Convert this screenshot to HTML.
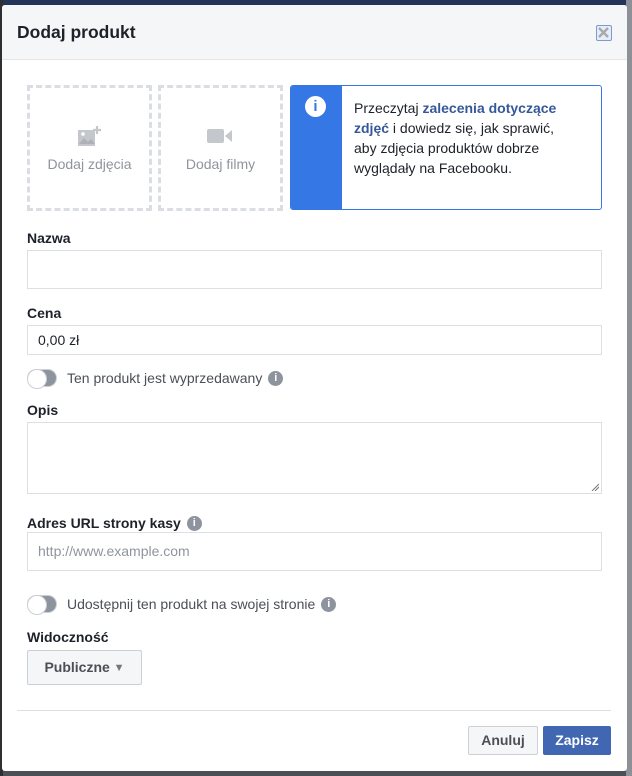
<!DOCTYPE html>
<html><head><meta charset="utf-8"><style>
*{box-sizing:border-box;margin:0;padding:0}
body{width:632px;height:776px;overflow:hidden;background:#4b4f56;font-family:"Liberation Sans",Arial,sans-serif;position:relative}
.topbar{position:absolute;left:0;top:0;width:632px;height:6px;background:#23335a}
.leftbar{position:absolute;left:0;top:0;width:3px;height:776px;background:#2d2f33}
.rightbar{position:absolute;right:0;top:0;width:6px;height:776px;background:#8d9096}
.modal{position:absolute;left:2px;top:5px;width:625px;height:766px;background:#fff;border-radius:3px;overflow:hidden}
.hdr{height:55px;background:#f5f6f7;border-bottom:1px solid #e5e5e5;position:relative}
.hdr h1{position:absolute;left:15px;top:17px;font-size:17.5px;font-weight:bold;color:#1d2129}
.close{position:absolute;left:594px;top:20px;width:16px;height:16px;border:1.5px solid #7b9ad8;border-radius:2px;background:#e8ecf3}
.abs{position:absolute}
.dash{border:3px dashed #dadde1;width:125px;height:126px;top:80px}
.dash span{position:absolute;left:0;right:0;top:68px;text-align:center;font-size:14px;color:#90949c}
.info{left:288px;top:80px;width:312px;height:125px;border:1px solid #3578e5;border-radius:3px;overflow:hidden}
.info .bl{position:absolute;left:0;top:0;width:51px;height:125px;background:#3578e5}
.info .ic{position:absolute;left:14px;top:10px;width:21px;height:21px;border-radius:50%;background:#fff;color:#3578e5;font-weight:bold;font-size:15px;text-align:center;line-height:21px}
.info p{position:absolute;left:63px;top:12px;width:222px;font-size:14px;line-height:20px;color:#1d2129}
.info b{color:#365899}
.lbl{font-size:14px;font-weight:bold;color:#1d2129;left:25px}
.inp{left:25px;width:575px;border:1px solid #dddfe2;background:#fff;font-size:14px;color:#1d2129;padding-left:10px}
.tog{left:25px;width:30px;height:18px;border-radius:9px;background:#8d949e;border:1px solid #ccd0d5}
.tog::after{content:"";position:absolute;left:-1px;top:-1px;width:18px;height:18px;border-radius:50%;background:#fff;border:1px solid #ccd0d5}
.tt{font-size:14px;color:#4b4f56;left:65px;line-height:16px}
.lbl{line-height:16px}
.ii{display:inline-block;width:15px;height:15px;border-radius:50%;background:#8d949e;color:#fff;font-size:11px;font-weight:bold;text-align:center;line-height:15px;vertical-align:top;margin-left:6px;position:relative;top:1px}
.btn{height:29px;border-radius:2px;font-size:14px;font-weight:bold;line-height:27px;text-align:center}
</style></head><body>
<div class="topbar"></div><div class="leftbar"></div><div class="rightbar"></div>
<div class="modal">
<div class="hdr"><h1>Dodaj produkt</h1><div class="close"><svg width="13" height="13" viewBox="0 0 13 13"><path d="M2 2L11 11M11 2L2 11" stroke="#a6a9ae" stroke-width="2.4"/></svg></div></div>
<div class="abs dash" style="left:25px"><svg class="abs" style="left:48px;top:38px" width="24" height="22" viewBox="0 0 24 22"><rect x="0" y="4" width="17" height="16" fill="#c4c7cc"/><path d="M1 18l5-6 4 4 3-3 4 5z" fill="#aeb1b6"/><circle cx="5" cy="8" r="1.8" fill="#fff"/><path d="M19 0v8M15 4h8" stroke="#c4c7cc" stroke-width="2.2"/></svg><span>Dodaj zdjęcia</span></div>
<div class="abs dash" style="left:156px"><svg class="abs" style="left:46px;top:40px" width="26" height="16" viewBox="0 0 26 16"><rect x="0" y="1" width="17" height="14" rx="2" fill="#c4c7cc"/><path d="M18 8l7-6v12z" fill="#c4c7cc"/></svg><span>Dodaj filmy</span></div>
<div class="abs info"><div class="bl"><div class="ic">i</div></div><p>Przeczytaj <b>zalecenia dotyczące zdjęć</b> i dowiedz się, jak sprawić, aby zdjęcia produktów dobrze wyglądały na Facebooku.</p></div>
<div class="abs lbl" style="top:225px">Nazwa</div>
<div class="abs inp" style="top:245px;height:39px"></div>
<div class="abs lbl" style="top:300px">Cena</div>
<div class="abs inp" style="top:320px;height:30px;line-height:28px">0,00 zł</div>
<div class="abs tog" style="top:364px"></div>
<div class="abs tt" style="top:365px">Ten produkt jest wyprzedawany<span class="ii">i</span></div>
<div class="abs lbl" style="top:397px">Opis</div>
<div class="abs inp" style="top:417px;height:72px"><svg class="abs" style="right:2px;bottom:2px" width="8" height="8"><path d="M1 8L8 1M4 8L8 4" stroke="#777" stroke-width="1"/></svg></div>
<div class="abs lbl" style="top:510px">Adres URL strony kasy<span class="ii">i</span></div>
<div class="abs inp" style="top:527px;height:39px;line-height:37px;color:#90949c">http://www.example.com</div>
<div class="abs tog" style="top:590px"></div>
<div class="abs tt" style="top:591px">Udostępnij ten produkt na swojej stronie<span class="ii">i</span></div>
<div class="abs lbl" style="top:624px">Widoczność</div>
<div class="abs btn" style="left:25px;top:645px;width:115px;height:35px;line-height:33px;background:#f5f6f7;border:1px solid #ccd0d5;color:#4b4f56">Publiczne <span style="font-size:11px;color:#777;vertical-align:1px">▼</span></div>
<div class="abs" style="left:15px;top:705px;width:594px;height:1px;background:#dddfe2"></div>
<div class="abs btn" style="left:466px;top:721px;width:70px;background:#f5f6f7;border:1px solid #ccd0d5;color:#4b4f56">Anuluj</div>
<div class="abs btn" style="left:541px;top:721px;width:68px;background:#4267b2;border:1px solid #4267b2;color:#fff">Zapisz</div>
</div>
</body></html>
